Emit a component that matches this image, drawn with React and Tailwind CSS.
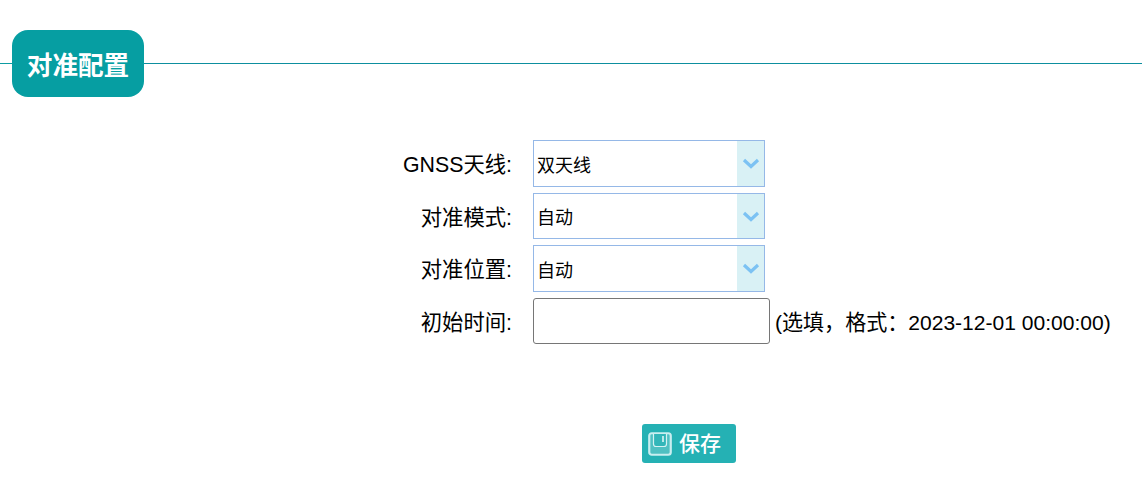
const F = { fontFamily: '"Liberation Sans", "Noto Sans CJK SC", sans-serif' };

function Chevron() {
  return (
    <svg width="18" height="11" viewBox="0 0 18 11" fill="none">
      <path d="M2 2 L9 8.5 L16 2" stroke="#7cc2f3" strokeWidth="3.2" />
    </svg>
  );
}

function Select({ value, h = "h-[46px]", pl = "pl-[3px]" }) {
  return (
    <div className={`flex ${h} w-[232px] border border-[#95b8e7] bg-white`}>
      <div className={`flex flex-1 items-center ${pl} pt-[5px] text-[18px] text-black`}>{value}</div>
      <div className="flex w-[27px] items-center justify-center bg-[#d9f1f5]">
        <Chevron />
      </div>
    </div>
  );
}

function Label({ children }) {
  return <div className="w-[512px] shrink-0 pt-[3px] text-right text-[21.33px] leading-[30px] text-black">{children}</div>;
}

export default function App() {
  return (
    <div className="h-[482px] w-[1142px] overflow-hidden bg-white pt-[30px]" style={F}>
      <div className="flex items-center">
        <div className="h-px w-[12px] bg-[#0d9ca2]" />
        <div className="flex h-[67px] w-[132px] items-center justify-center rounded-[16px] bg-[#069ea2] pt-[5px] text-[25.6px] font-bold text-white">
          对准配置
        </div>
        <div className="h-px flex-1 bg-[#0d8f9f]" />
      </div>
      <div className="mt-[43px] flex flex-col">
        <div className="flex items-center">
          <Label>GNSS天线:</Label>
          <div className="ml-[21px]"><Select value="双天线" h="h-[47px]" pl="pl-[3px]" /></div>
        </div>
        <div className="mt-[6px] flex items-center">
          <Label>对准模式:</Label>
          <div className="ml-[21px]"><Select value="自动" /></div>
        </div>
        <div className="mt-[6px] flex items-center">
          <Label>对准位置:</Label>
          <div className="ml-[21px]"><Select value="自动" h="h-[47px]" /></div>
        </div>
        <div className="mt-[6px] flex items-center">
          <Label>初始时间:</Label>
          <div className="ml-[21px] h-[46px] w-[237px] rounded-[3px] border border-[#767676] bg-white" />
          <div className="ml-[5px] whitespace-nowrap pt-[3px] text-[21.05px] leading-[30px] text-black">(选填，格式：2023-12-01 00:00:00)</div>
        </div>
      </div>
      <div className="ml-[642px] mt-[80px] flex h-[39px] w-[94px] items-center rounded-[3px] bg-[#25b1b4] pl-[6px] text-white">
        <svg width="24" height="24" viewBox="0 0 24 24" fill="none">
          <rect x="1.25" y="1.25" width="21.5" height="21.5" rx="2.5" fill="#4fc0c2" stroke="#c9eef0" strokeWidth="2.2" />
          <path d="M5.5 2 V12 Q5.5 14.5 8 14.5 H16 Q18.5 14.5 18.5 12 V2" fill="#32b6b9" stroke="#d5f2f3" strokeWidth="1.2" />
          <path d="M15 4 V10" stroke="#e8f8f8" strokeWidth="1.5" />
        </svg>
        <span className="ml-[7px] mb-[3px] text-[21px] font-medium leading-none" style={{ fontFamily: '"Noto Sans CJK SC", sans-serif' }}>保存</span>
      </div>
    </div>
  );
}
